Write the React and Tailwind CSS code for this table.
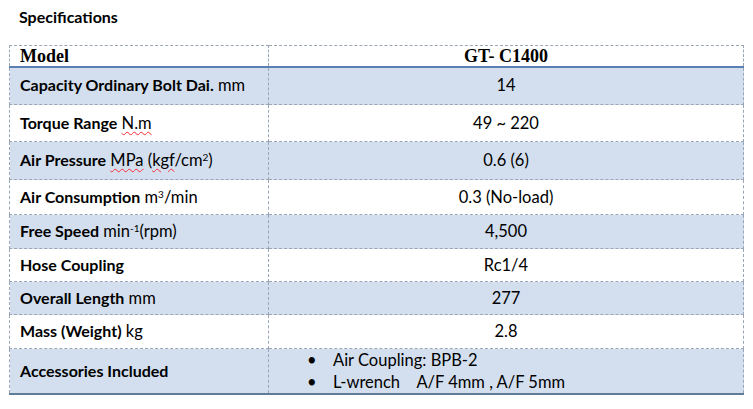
import React from 'react';

const wavy = 'underline decoration-wavy decoration-red-500 decoration-1 underline-offset-2';

const rows = [
  { label: <><b>Capacity Ordinary Bolt Dai.</b> mm</>, value: '14', h: 'h-[38px]', blue: true },
  { label: <><b>Torque Range</b> <span className={wavy}>N.m</span></>, value: '49 ~ 220', h: 'h-[37px]' },
  {
    label: (
      <>
        <b>Air Pressure</b> <span className={wavy}>MPa</span> (<span className={wavy}>kgf</span>/cm<sup className="text-[10px]">2</sup>)
      </>
    ),
    value: '0.6 (6)',
    h: 'h-[38px]',
    blue: true,
  },
  { label: <><b>Air Consumption</b> m<sup className="text-[10px]">3</sup>/min</>, value: '0.3 (No-load)', h: 'h-[35px]' },
  { label: <><b>Free Speed</b> min<sup className="text-[10px]">-1</sup>(rpm)</>, value: '4,500', h: 'h-[34px]', blue: true },
  { label: <b>Hose Coupling</b>, value: 'Rc1/4', h: 'h-[33px]' },
  { label: <><b>Overall Length</b> mm</>, value: '277', h: 'h-[33px]', blue: true },
  { label: <><b>Mass (Weight)</b> kg</>, value: '2.8', h: 'h-[34px]' },
];

const cell = 'border border-dashed border-[#9aa5b5]';

export default function App() {
  return (
    <div className="w-[753px] h-[409px] bg-white text-black font-['Lato','Open_Sans',sans-serif] text-[16.5px]">
      <div className="h-[45px] pl-[19px] pt-[5px] font-bold text-[16px]">Specifications</div>
      <table className="ml-[9px] w-[735px] border-collapse">
        <tbody>
          <tr className="h-[21px] border-b-2 border-b-[#5b7fb0]">
            <td className={`${cell} w-[259px] pl-[10px] font-['Liberation_Serif',serif] font-bold text-[18px] leading-none`}>Model</td>
            <td className={`${cell} text-center font-['Liberation_Serif',serif] font-bold text-[18px] leading-none`}>GT- C1400</td>
          </tr>
          {rows.map((r, i) => (
            <tr key={i} className={`${r.h} ${r.blue ? 'bg-[#d3dfee]' : ''}`}>
              <td className={`${cell} pl-[10px] [&_b]:text-[16px]`}>{r.label}</td>
              <td className={`${cell} text-center`}>{r.value}</td>
            </tr>
          ))}
          <tr className="h-[45px] bg-[#d3dfee] border-b-2 border-b-[#5f7c96]">
            <td className={`${cell} pl-[10px] font-bold text-[16px]`}>Accessories Included</td>
            <td className={`${cell} pl-[38px] leading-[22px]`}>
              <div className="flex">
                <span className="w-[26px]">•</span>
                <span>Air Coupling: BPB-2</span>
              </div>
              <div className="flex">
                <span className="w-[26px]">•</span>
                <span className="whitespace-pre">L-wrench    A/F 4mm , A/F 5mm</span>
              </div>
            </td>
          </tr>
        </tbody>
      </table>
    </div>
  );
}
